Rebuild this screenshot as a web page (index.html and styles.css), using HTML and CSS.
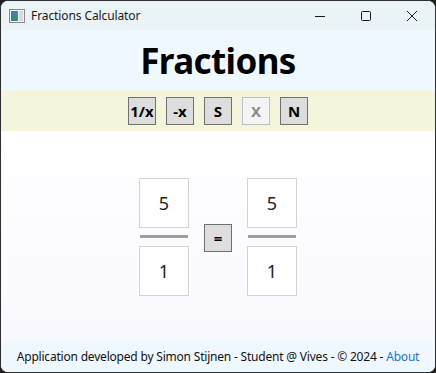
FILE: index.html
```html
<!DOCTYPE html>
<html lang="en">
<head>
  <meta charset="UTF-8">
  <title>Fractions Calculator</title>
  <link rel="stylesheet" href="styles.css">
</head>
<body>
  <div class="window">
    <div class="titlebar">
      <svg class="appIcon" width="16" height="14" viewBox="0 0 16 14">
        <rect x="0.5" y="0.5" width="15" height="13" fill="#f2f2f2" stroke="#8a8a8a"/>
        <rect x="2" y="2" width="7" height="10" fill="#3c8a86"/>
        <rect x="2" y="2" width="7" height="4" fill="#4a7fb4"/>
        <rect x="10" y="2" width="4" height="10" fill="#d8d8d8"/>
      </svg>
      <span class="titleText">Fractions Calculator</span>
      <div class="captions">
        <span class="cap">
          <svg width="10" height="10" viewBox="0 0 10 10"><path d="M0 5.5h10" stroke="#1a1a1a" stroke-width="1"/></svg>
        </span>
        <span class="cap">
          <svg width="10" height="10" viewBox="0 0 10 10"><rect x="0.5" y="0.5" width="9" height="9" rx="1" fill="none" stroke="#1a1a1a"/></svg>
        </span>
        <span class="cap">
          <svg width="10" height="10" viewBox="0 0 10 10"><path d="M0 0L10 10M10 0L0 10" stroke="#1a1a1a" stroke-width="1"/></svg>
        </span>
      </div>
    </div>
    <div class="header">
      <h1>Fractions</h1>
    </div>
    <div class="toolbar">
      <button class="btn">1/x</button>
      <button class="btn">-x</button>
      <button class="btn">S</button>
      <button class="btn" disabled>X</button>
      <button class="btn">N</button>
    </div>
    <div class="content">
      <div class="fraction">
        <div class="box">5</div>
        <div class="bar"></div>
        <div class="box">1</div>
      </div>
      <button class="btn eq">=</button>
      <div class="fraction">
        <div class="box">5</div>
        <div class="bar"></div>
        <div class="box">1</div>
      </div>
    </div>
    <div class="footer">
      Application developed by Simon Stijnen - Student @ Vives - &copy; 2024 - <a href="#">About</a>
    </div>
  </div>
</body>
</html>
```
FILE: styles.css
```css
body{
  margin: 0;
  background: #202020;
  font-family: "Noto Sans", "Open Sans", sans-serif;
}
.window{
  width: 436px;
  height: 373px;
  box-sizing: border-box;
  border: 1px solid #2e2e2e;
  border-radius: 8px;
  overflow: hidden;
  display: flex;
  flex-direction: column;
  background: #f8f8ff;
}
.titlebar{
  height: 29px;
  flex: none;
  display: flex;
  align-items: center;
  background: #eaf3f6;
  padding-left: 8px;
}
.appIcon{
  margin-top: 1px;
}
.titleText{
  margin-left: 6px;
  font-size: 12px;
  color: #1a1a1a;
  letter-spacing: -0.1px;
}
.captions{
  margin-left: auto;
  display: flex;
}
.cap{
  width: 46px;
  height: 29px;
  display: flex;
  align-items: center;
  justify-content: center;
}
.header{
  height: 61px;
  flex: none;
  background: #f0f8ff;
  display: flex;
  align-items: center;
  justify-content: center;
}
.header h1{
  margin: 0;
  font-size: 35px;
  font-weight: bold;
  letter-spacing: -0.6px;
  color: #000;
}
.toolbar{
  height: 40px;
  flex: none;
  background: #f5f5dc;
  display: flex;
  align-items: center;
  justify-content: center;
  gap: 10px;
}
.btn{
  width: 28px;
  height: 28px;
  padding: 0;
  border: 1px solid #707070;
  background: #dddddd;
  font-family: "Noto Sans", sans-serif;
  font-weight: bold;
  font-size: 15px;
  color: #000;
  line-height: 26px;
}
.btn:disabled{
  background: #f4f4f4;
  border-color: #bdbdbd;
  color: #8a8a8a;
}
.content{
  flex: 1;
  background: linear-gradient(#ffffff, #f8f8ff);
  display: flex;
  align-items: center;
  justify-content: center;
  gap: 15px;
  padding-top: 2px;
}
.fraction{
  width: 50px;
  display: flex;
  flex-direction: column;
  align-items: center;
}
.box{
  width: 50px;
  height: 50px;
  box-sizing: border-box;
  border: 1px solid #d4d4d4;
  background: #fff;
  display: flex;
  align-items: center;
  justify-content: center;
  font-size: 18px;
  color: #222;
}
.bar{
  width: 48px;
  height: 3px;
  background: #9e9e9e;
  margin: 7px 0 8px;
}
.eq{
  margin-top: 1px;
}
.footer{
  height: 30px;
  flex: none;
  background: #f0f8ff;
  display: flex;
  align-items: center;
  justify-content: center;
  font-size: 12px;
  color: #111;
  letter-spacing: -0.2px;
  padding-bottom: 1px;
}
.footer a{
  color: #1a73d4;
  text-decoration: none;
  margin-left: 3px;
}
```
